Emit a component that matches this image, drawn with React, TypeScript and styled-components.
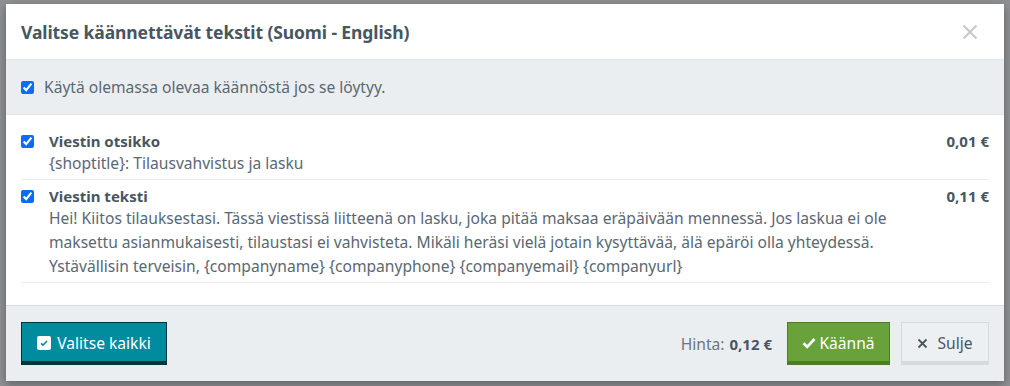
import React from "react";
import styled, { createGlobalStyle } from "styled-components";

const Global = createGlobalStyle`
  html, body { margin: 0; padding: 0; }
  body {
    background: #8e9194;
    font-family: "Noto Sans", "Open Sans", sans-serif;
    width: 1010px;
    height: 386px;
    overflow: hidden;
  }
  * { box-sizing: border-box; }
`;

const Backdrop = styled.div`
  width: 1010px;
  height: 386px;
  padding: 4px 6px 5px 6px;
  background: #8e9194;
`;

const Modal = styled.div`
  width: 998px;
  height: 377px;
  background: #fff;
  display: flex;
  flex-direction: column;
  box-shadow: 0 3px 9px rgba(0, 0, 0, 0.35);
`;

const Header = styled.div`
  height: 56px;
  display: flex;
  align-items: center;
  justify-content: space-between;
  padding: 0 26px 0 15px;
  border-bottom: 1px solid #e3e6e9;
`;

const Title = styled.h4`
  margin: 0;
  font-size: 17.5px;
  font-weight: 700;
  color: #48565f;
  letter-spacing: -0.1px;
`;

const CloseX = styled.button`
  border: 0;
  background: transparent;
  padding: 0;
  width: 16px;
  height: 16px;
  display: flex;
  cursor: pointer;
`;

const OptionBar = styled.label`
  height: 55px;
  display: flex;
  align-items: center;
  gap: 10px;
  padding: 0 15px 0 15px;
  background: #ebeef1;
  border-bottom: 1px solid #e3e6e9;
  font-size: 15.6px;
  color: #5a6873;
`;

const Check = styled.input.attrs({ type: "checkbox" })`
  margin: 0;
  width: 13px;
  height: 13px;
  accent-color: #0b6cf5;
  flex: none;
`;

const Body = styled.div`
  flex: 1;
  padding: 10px 15px 0 15px;
`;

const Item = styled.div`
  display: flex;
  align-items: flex-start;
  gap: 15px;
  padding: 6px 0 4px 0;
  border-bottom: 1px solid #e9ecef;
`;

const ItemCheck = styled(Check)`
  margin-top: 4px;
`;

const ItemMain = styled.div`
  flex: 1;
`;

const ItemTitle = styled.div`
  font-size: 15px;
  font-weight: 700;
  line-height: 20px;
  color: #48565f;
`;

const ItemText = styled.div`
  font-size: 15.6px;
  line-height: 24px;
  color: #5a6873;
`;

const Price = styled.div`
  font-size: 15px;
  font-weight: 700;
  line-height: 20px;
  color: #48565f;
  white-space: nowrap;
`;

const Footer = styled.div`
  height: 76px;
  background: #ebeef1;
  border-top: 1px solid #d6dbdf;
  display: flex;
  align-items: flex-start;
  padding: 16px 15px 0 15px;
`;

const Spacer = styled.div`
  flex: 1;
`;

const Total = styled.div`
  height: 43px;
  display: flex;
  align-items: center;
  font-size: 15.6px;
  color: #6a7781;
  margin-right: 15px;
  b { color: #48565f; margin-left: 5px; font-size: 15px; }
`;

const Btn = styled.button<{ $bg: string; $edge: string; $fg: string; $w: number }>`
  height: 43px;
  width: ${(p) => p.$w}px;
  background: ${(p) => p.$bg};
  color: ${(p) => p.$fg};
  border: 1px solid ${(p) => p.$edge};
  border-bottom: 4px solid ${(p) => p.$edge};
  font-family: "Noto Sans", "Open Sans", sans-serif;
  font-size: 15.6px;
  display: flex;
  align-items: center;
  justify-content: center;
  gap: 6px;
  padding: 0;
  padding-top: 2px;
  cursor: pointer;
`;

const GhostBtn = styled(Btn)`
  border-color: #d5dade;
  border-bottom-color: #d5dade;
  margin-left: 11px;
  gap: 9px;
`;

const CheckSquare = () => (
  <svg width="14" height="14" viewBox="0 0 14 14">
    <rect x="0" y="0" width="14" height="14" rx="2" fill="#ffffff" />
    <path d="M4 7.3 L6 9.2 L10 5" stroke="#008a9c" strokeWidth="1.6" fill="none" />
  </svg>
);

const Tick = () => (
  <svg width="14" height="12" viewBox="0 0 14 12">
    <path d="M1.5 6.2 L5.2 9.8 L12.5 2" stroke="#ffffff" strokeWidth="2.6" fill="none" />
  </svg>
);

const SmallX = () => (
  <svg width="11" height="11" viewBox="0 0 11 11">
    <path d="M1.5 1.5 L9.5 9.5 M9.5 1.5 L1.5 9.5" stroke="#4a565e" strokeWidth="1.8" />
  </svg>
);

export default function App() {
  return (
    <>
      <Global />
      <Backdrop>
        <Modal>
          <Header>
            <Title>Valitse käännettävät tekstit (Suomi - English)</Title>
            <CloseX aria-label="close">
              <svg width="16" height="16" viewBox="0 0 16 16">
                <path d="M1.5 1.5 L14.5 14.5 M14.5 1.5 L1.5 14.5" stroke="#c9c9c9" strokeWidth="2.2" />
              </svg>
            </CloseX>
          </Header>
          <OptionBar>
            <Check defaultChecked />
            Käytä olemassa olevaa käännöstä jos se löytyy.
          </OptionBar>
          <Body>
            <Item>
              <ItemCheck defaultChecked />
              <ItemMain>
                <ItemTitle>Viestin otsikko</ItemTitle>
                <ItemText>{"{shoptitle}: Tilausvahvistus ja lasku"}</ItemText>
              </ItemMain>
              <Price>0,01 €</Price>
            </Item>
            <Item>
              <ItemCheck defaultChecked />
              <ItemMain>
                <ItemTitle>Viestin teksti</ItemTitle>
                <ItemText>
                  Hei! Kiitos tilauksestasi. Tässä viestissä liitteenä on lasku, joka pitää maksaa eräpäivään mennessä. Jos laskua ei ole
                  <br />
                  maksettu asianmukaisesti, tilaustasi ei vahvisteta. Mikäli heräsi vielä jotain kysyttävää, älä epäröi olla yhteydessä.
                  <br />
                  {"Ystävällisin terveisin, {companyname} {companyphone} {companyemail} {companyurl}"}
                </ItemText>
              </ItemMain>
              <Price>0,11 €</Price>
            </Item>
          </Body>
          <Footer>
            <Btn $bg="#008c9e" $edge="#00343b" $fg="#ffffff" $w={146}>
              <CheckSquare />
              Valitse kaikki
            </Btn>
            <Spacer />
            <Total>
              Hinta: <b>0,12 €</b>
            </Total>
            <Btn $bg="#69a13a" $edge="#4d7d2a" $fg="#ffffff" $w={103} style={{ gap: 3 }}>
              <Tick />
              Käännä
            </Btn>
            <GhostBtn $bg="#edf0f2" $edge="#d5dade" $fg="#4a565e" $w={88}>
              <SmallX />
              Sulje
            </GhostBtn>
          </Footer>
        </Modal>
      </Backdrop>
    </>
  );
}
